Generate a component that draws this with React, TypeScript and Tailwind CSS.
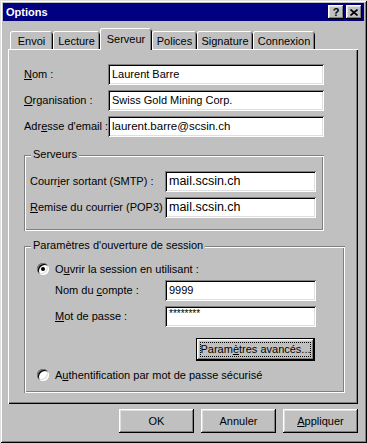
import type { ReactNode } from 'react';

// Win95 bevels, drawn with inset shadows so they take no room
const raised = 'shadow-[inset_-1px_-1px_#000,inset_1px_1px_#fff,inset_-2px_-2px_#808080,inset_2px_2px_#dfdfdf]';
const sunken = 'shadow-[inset_1px_1px_#808080,inset_-1px_-1px_#fff,inset_2px_2px_#000,inset_-2px_-2px_#dfdfdf]';
const etched = 'shadow-[inset_1px_1px_#808080,inset_-1px_-1px_#fff,inset_2px_2px_#fff,inset_-2px_-2px_#808080]';

function Field({ value, width, big }: { value: string; width: string; big?: string }) {
    return (
        <div className={`${width} h-[21px] bg-white ${sunken} flex items-center pl-[4px] ${big ?? 'text-[11px]'} leading-none whitespace-nowrap`}>
            {value}
        </div>
    );
}

function Row({ label, labelW, children }: { label: ReactNode; labelW: string; children: ReactNode }) {
    return (
        <div className="flex items-center h-[21px]">
            <span className={`${labelW} shrink-0 whitespace-nowrap`}>{label}</span>
            {children}
        </div>
    );
}

function Radio({ checked }: { checked?: boolean }) {
    return (
        <span className={`w-3 h-3 shrink-0 rounded-full bg-white ${sunken} flex items-center justify-center`}>
            {checked && <span className="w-1 h-1 rounded-full bg-black" />}
        </span>
    );
}

function Tab({ label, width, active }: { label: string; width: string; active?: boolean }) {
    if (active) {
        return (
            <div className={`${width} h-[22px] -mb-[1px] relative z-10 bg-[#c0c0c0] rounded-t-[3px] shadow-[inset_1px_0_#fff,inset_0_1px_#fff,inset_-1px_0_#000,inset_-2px_0_#808080] flex justify-center pt-[3px]`}>
                {label}
            </div>
        );
    }
    return (
        <div className={`${width} h-[18px] rounded-t-[3px] shadow-[inset_1px_0_#fff,inset_0_1px_#fff,inset_-1px_0_#000,inset_-2px_0_#808080] flex justify-center pt-[2px]`}>
            {label}
        </div>
    );
}

function Group({ title, width, height, children }: { title: string; width: string; height: string; children: ReactNode }) {
    return (
        <div className={`relative ${width} ${height} ${etched}`}>
            <span className="absolute -top-[8px] left-[7px] px-[2px] bg-[#c0c0c0] leading-[14px]">{title}</span>
            {children}
        </div>
    );
}

export default function App() {
    return (
        <div className="w-[367px] h-[443px] bg-[#c0c0c0] p-[3px] text-black text-[11px] font-['Liberation_Sans',Arial,sans-serif] shadow-[inset_1px_1px_#dfdfdf,inset_-1px_-1px_#000,inset_2px_2px_#fff,inset_-2px_-2px_#808080]">
            {/* title bar */}
            <div className="h-[18px] bg-[#000080] flex items-center justify-between pl-[3px] pr-[2px]">
                <span className="text-white font-bold text-[11px]">Options</span>
                <div className="flex gap-[2px]">
                    <div className={`w-[16px] h-[14px] bg-[#c0c0c0] ${raised} flex items-center justify-center font-bold text-[11px] leading-none`}>?</div>
                    <div className={`w-[16px] h-[14px] bg-[#c0c0c0] ${raised} flex items-center justify-center`}>
                        <svg width="8" height="7" viewBox="0 0 8 7">
                            <path d="M0.5 0.5 L7.5 6.5 M7.5 0.5 L0.5 6.5" stroke="#000" strokeWidth="1.6" />
                        </svg>
                    </div>
                </div>
            </div>

            <div className="ml-[5px] w-[350px]">
                {/* tabs */}
                <div className="mt-[7px] h-[21px] flex items-end pl-[2px]">
                    <Tab label="Envoi" width="w-[43px]" />
                    <Tab label="Lecture" width="w-[47px]" />
                    <Tab label="Serveur" width="w-[52px]" active />
                    <Tab label="Polices" width="w-[45px]" />
                    <Tab label="Signature" width="w-[56px]" />
                    <Tab label="Connexion" width="w-[62px]" />
                </div>

                {/* panel */}
                <div className="h-[355px] shadow-[inset_1px_1px_#fff,inset_-1px_-1px_#000,inset_-2px_-2px_#808080] pl-[16px] pt-[15px] flex flex-col">
                    <div className="flex flex-col gap-[5px]">
                        <Row label={<><u>N</u>om :</>} labelW="w-[84px]">
                            <Field value="Laurent Barre" width="w-[216px]" />
                        </Row>
                        <Row label={<><u>O</u>rganisation :</>} labelW="w-[84px]">
                            <Field value="Swiss Gold Mining Corp." width="w-[216px]" />
                        </Row>
                        <Row label={<>Adr<u>e</u>sse d'email :</>} labelW="w-[84px]">
                            <Field value="laurent.barre@scsin.ch" width="w-[216px]" big="text-[11.5px]" />
                        </Row>
                    </div>

                    <div className="mt-[18px]">
                        <Group title="Serveurs" width="w-[300px]" height="h-[76px]">
                            <div className="pt-[16px] pl-[6px] flex flex-col gap-[5px]">
                                <Row label={<>Courr<u>i</u>er sortant (SMTP) :</>} labelW="w-[135px]">
                                    <Field value="mail.scsin.ch" width="w-[151px]" big="text-[12.5px]" />
                                </Row>
                                <Row label={<><u>R</u>emise du courrier (POP3) :</>} labelW="w-[135px]">
                                    <Field value="mail.scsin.ch" width="w-[151px]" big="text-[12.5px]" />
                                </Row>
                            </div>
                        </Group>
                    </div>

                    <div className="mt-[15px]">
                        <Group title="Paramètres d'ouverture de session" width="w-[321px]" height="h-[147px]">
                            <div className="pt-[16px] flex flex-col">
                                <div className="h-[14px] flex items-center gap-[6px] pl-[13px]">
                                    <Radio checked />
                                    <span>O<u>u</u>vrir la session en utilisant :</span>
                                </div>
                                <div className="mt-[4px] pl-[31px] flex flex-col gap-[5px]">
                                    <Row label={<>Nom du <u>c</u>ompte :</>} labelW="w-[110px]">
                                        <Field value="9999" width="w-[151px]" />
                                    </Row>
                                    <Row label={<><u>M</u>ot de passe :</>} labelW="w-[110px]">
                                        <div className={`w-[151px] h-[21px] bg-white ${sunken} pl-[4px] pt-[3px] text-[10px] leading-none`}>********</div>
                                    </Row>
                                </div>
                                <div className="mt-[11px] pl-[172px]">
                                    <div className="w-[119px] h-[23px] border border-black">
                                        <div className={`w-full h-full ${raised} px-[3px] py-[3px]`}>
                                            <div className="w-full h-full border border-dotted border-black flex items-center justify-center whitespace-nowrap">
                                                <span className="whitespace-nowrap">Param<u>è</u>tres avancés...</span>
                                            </div>
                                        </div>
                                    </div>
                                </div>
                                <div className="mt-[7px] h-[14px] flex items-center gap-[6px] pl-[13px]">
                                    <Radio />
                                    <span>A<u>u</u>thentification par mot de passe sécurisé</span>
                                </div>
                            </div>
                        </Group>
                    </div>
                </div>

                {/* dialog buttons */}
                <div className="mt-[5px] flex justify-end gap-[7px]">
                    <div className={`w-[75px] h-[24px] ${raised} flex items-center justify-center`}>OK</div>
                    <div className={`w-[75px] h-[24px] ${raised} flex items-center justify-center`}>Annuler</div>
                    <div className={`w-[75px] h-[24px] ${raised} flex items-center justify-center`}><span><u>A</u>ppliquer</span></div>
                </div>
            </div>
        </div>
    );
}
